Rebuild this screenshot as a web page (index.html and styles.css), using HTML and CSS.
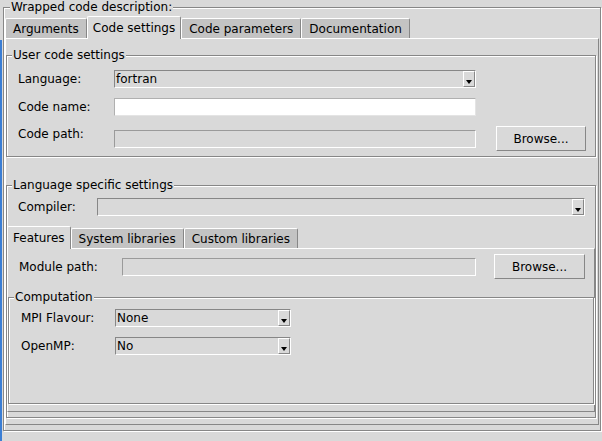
FILE: index.html
```html
<!DOCTYPE html>
<html>
<head>
<meta charset="utf-8">
<link rel="stylesheet" href="styles.css">
</head>
<body>
<div class="app">
  <div class="edge"></div>
  <div class="main">
  <section class="lf outer">
    <div class="lf-title">Wrapped code description:</div>
    <div class="nb">
      <div class="tabs">
        <div class="tab">Arguments</div>
        <div class="tab sel">Code settings</div>
        <div class="tab">Code parameters</div>
        <div class="tab">Documentation</div>
      </div>
      <div class="panel outer-panel">
        <section class="lf user">
          <div class="lf-title">User code settings</div>
          <div class="grid g-user">
            <span class="lbl">Language:</span>
            <div class="combo"><span class="val">fortran</span><span class="arrow"><i></i></span></div>
            <span></span>
            <span class="lbl">Code name:</span>
            <div class="entry white"></div>
            <span></span>
            <span class="lbl high">Code path:</span>
            <div class="entry"></div>
            <button class="btn">Browse...</button>
          </div>
        </section>
        <section class="lf lang">
          <div class="lf-title">Language specific settings</div>
          <div class="compiler">
            <span class="lbl">Compiler:</span>
            <div class="combo"><span class="val"></span><span class="arrow"><i></i></span></div>
          </div>
          <div class="nb inner">
            <div class="tabs">
              <div class="tab sel">Features</div>
              <div class="tab">System libraries</div>
              <div class="tab">Custom libraries</div>
            </div>
            <div class="panel">
              <div class="grid g-module">
                <span class="lbl">Module path:</span>
                <div class="entry"></div>
                <button class="btn">Browse...</button>
              </div>
              <section class="lf comp">
                <div class="lf-title">Computation</div>
                <div class="grid g-comp">
                  <span class="lbl">MPI Flavour:</span>
                  <div class="combo"><span class="val">None</span><span class="arrow"><i></i></span></div>
                  <span class="lbl">OpenMP:</span>
                  <div class="combo"><span class="val">No</span><span class="arrow"><i></i></span></div>
                </div>
              </section>
            </div>
          </div>
        </section>
      </div>
    </div>
  </section>
  </div>
</div>
</body>
</html>
```
FILE: styles.css
```css
* { box-sizing: border-box; }
html, body { margin: 0; padding: 0; background: #d9d9d9; }
body {
  width: 602px;
  height: 441px;
  overflow: hidden;
  font: 12px/14px "DejaVu Sans", sans-serif;
  color: #000;
}
.app {
  height: 441px;
  display: flex;
  background: #d9d9d9;
}
.edge {
  width: 2px;
  margin-top: 40px;
  background: #3b7ed4;
  flex: none;
}
.main {
  flex: 1;
  display: flex;
  flex-direction: column;
  padding: 0 1px 0 1px;
}
.lf {
  display: flex;
  flex-direction: column;
  border: 1px solid #878787;
  box-shadow: inset 1px 1px 0 #fff, 1px 1px 0 #fff;
}
.lf-title {
  align-self: flex-start;
  margin: -8px 0 0 5px;
  padding: 0 1px;
  background: #d9d9d9;
  line-height: 14px;
  white-space: nowrap;
}
.outer {
  flex: 1;
  margin: 7px 0 10px 0;
  padding: 0 1px 5px 1px;
}
.nb {
  flex: 1;
  display: flex;
  flex-direction: column;
}
.tabs {
  display: flex;
  align-items: flex-end;
  height: 22px;
  margin-top: 2px;
}
.tab {
  height: 20px;
  display: flex;
  align-items: center;
  padding: 1px 7px 0 7px;
  background: #c3c3c3;
  border: 1px solid;
  border-bottom: none;
  border-color: #fff #878787 #fff #fff;
  border-radius: 2px 2px 0 0;
  white-space: nowrap;
}
.tab.sel {
  height: 23px;
  margin-bottom: -1px;
  padding: 0 5px 1px 5px;
  background: #d9d9d9;
  position: relative;
  z-index: 1;
}
.panel {
  flex: 1;
  display: flex;
  flex-direction: column;
  border: 1px solid;
  border-color: #fff #878787 #878787 #fff;
}
.outer-panel { padding-right: 1px; }
.user { margin: 16px 1px 0 0; }
.lang { flex: 1; margin: 28px 1px 6px 0; padding-bottom: 5px; }
.grid {
  display: grid;
  align-items: center;
}
.g-user {
  grid-template-columns: 96px 362px 110px;
  grid-template-rows: 28px 28px 35px;
  margin: 3px 0 0 11px;
}
.lbl { white-space: nowrap; }
.lbl.high { align-self: start; margin-top: 6px; }
.compiler {
  display: flex;
  align-items: center;
  height: 18px;
  margin: 6px 10px 0 11px;
}
.compiler .lbl { width: 79px; }
.compiler .combo { flex: 1; }
.inner { margin-top: 8px; }
.g-module {
  grid-template-columns: 103px 354px 109px;
  grid-template-rows: 35px;
  margin-left: 11px;
}
.g-module .btn { width: 91px; }
.comp { flex: 1; margin: 13px 0 7px 0; }
.g-comp {
  grid-template-columns: 94px 176px;
  grid-template-rows: 28px 28px;
  margin-left: 12px;
}
.combo {
  height: 18px;
  display: flex;
  background: #d9d9d9;
  border: 1px solid;
  border-color: #878787 #fff #fff #878787;
}
.combo .val {
  flex: 1;
  padding-left: 1px;
  line-height: 16px;
  white-space: nowrap;
}
.arrow {
  width: 12px;
  display: flex;
  align-items: flex-end;
  justify-content: center;
  padding-bottom: 2px;
  border: 1px solid;
  border-color: #fff #878787 #878787 #fff;
}
.arrow i {
  width: 0;
  height: 0;
  border-left: 3px solid transparent;
  border-right: 3px solid transparent;
  border-top: 4px solid #000;
}
.entry {
  height: 18px;
  background: #d9d9d9;
  border: 1px solid;
  border-color: #9a9a9a #fff #fff #9a9a9a;
}
.entry.white { background: #fff; border-color: #b0b0b0 #e4e4e4 #e4e4e4 #b0b0b0; }
.btn {
  justify-self: end;
  width: 90px;
  height: 25px;
  padding: 0;
  font: inherit;
  color: #000;
  background: #d9d9d9;
  border: 1px solid;
  border-color: #fff #878787 #878787 #fff;
  border-radius: 0;
}
```
